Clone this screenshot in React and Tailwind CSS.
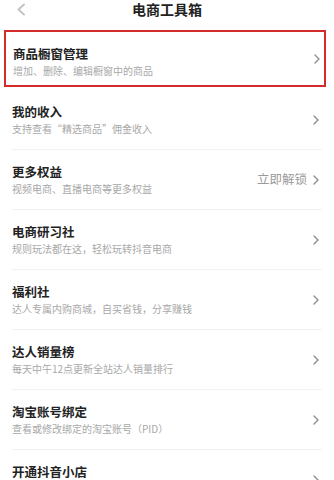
const items = [
  { title: '我的收入', desc: '支持查看“精选商品”佣金收入' },
  { title: '更多权益', desc: '视频电商、直播电商等更多权益', extra: '立即解锁' },
  { title: '电商研习社', desc: '规则玩法都在这，轻松玩转抖音电商' },
  { title: '福利社', desc: '达人专属内购商城，自买省钱，分享赚钱' },
  { title: '达人销量榜', desc: '每天中午12点更新全站达人销量排行' },
  { title: '淘宝账号绑定', desc: '查看或修改绑定的淘宝账号（PID）' },
  { title: '开通抖音小店', desc: '' },
]

function Chevron() {
  return (
    <svg width="6" height="10" viewBox="0 0 6 10" fill="none" className="shrink-0">
      <path d="M1 1l4 4-4 4" stroke="#8f8f8f" strokeWidth="1.4" strokeLinecap="round" strokeLinejoin="round" />
    </svg>
  )
}

export default function App() {
  return (
    <div
      className="w-[334px] h-[480px] overflow-hidden bg-white"
      style={{ fontFamily: '"Noto Sans CJK SC", "Noto Sans", sans-serif' }}
    >
      {/* header */}
      <div className="relative h-[30px] flex justify-center">
        <svg width="10" height="13" viewBox="0 0 10 13" fill="none" className="absolute left-[16px] top-[3px]">
          <path d="M8 1.5L2.5 6.5 8 11.5" stroke="#c4c4c4" strokeWidth="2" strokeLinecap="round" strokeLinejoin="round" />
        </svg>
        <div className="text-[14px] leading-[18px] font-semibold text-[#222]">电商工具箱</div>
      </div>

      {/* highlighted row */}
      <div className="mx-[4px] w-[322px] h-[57px] border-2 border-[#d42a2a] flex items-center pl-[7px] pr-[4px]">
        <div className="flex-1 self-stretch flex flex-col pt-[13px]">
          <div className="text-[12.5px] leading-[18px] font-semibold text-[#222]">商品橱窗管理</div>
          <div className="mt-[1px] h-[14px] text-[10px] leading-[14px] text-[#a8a8a8]">增加、删除、编辑橱窗中的商品</div>
        </div>
        <Chevron />
      </div>

      <div className="mt-[3px]">
        {items.map((it) => (
          <div key={it.title} className="mx-3 h-[60px] border-b border-[#f2f2f2] flex items-center pr-[3px]">
            <div className="flex-1 self-stretch flex flex-col pt-[13px]">
              <div className="text-[12.5px] leading-[18px] font-semibold text-[#222]">{it.title}</div>
              <div className="mt-[1px] h-[14px] text-[10px] leading-[14px] text-[#a8a8a8]">{it.desc}</div>
            </div>
            {it.extra && <span className="mr-[6px] text-[12.5px] text-[#9a9a9a]">{it.extra}</span>}
            <Chevron />
          </div>
        ))}
      </div>
    </div>
  )
}
